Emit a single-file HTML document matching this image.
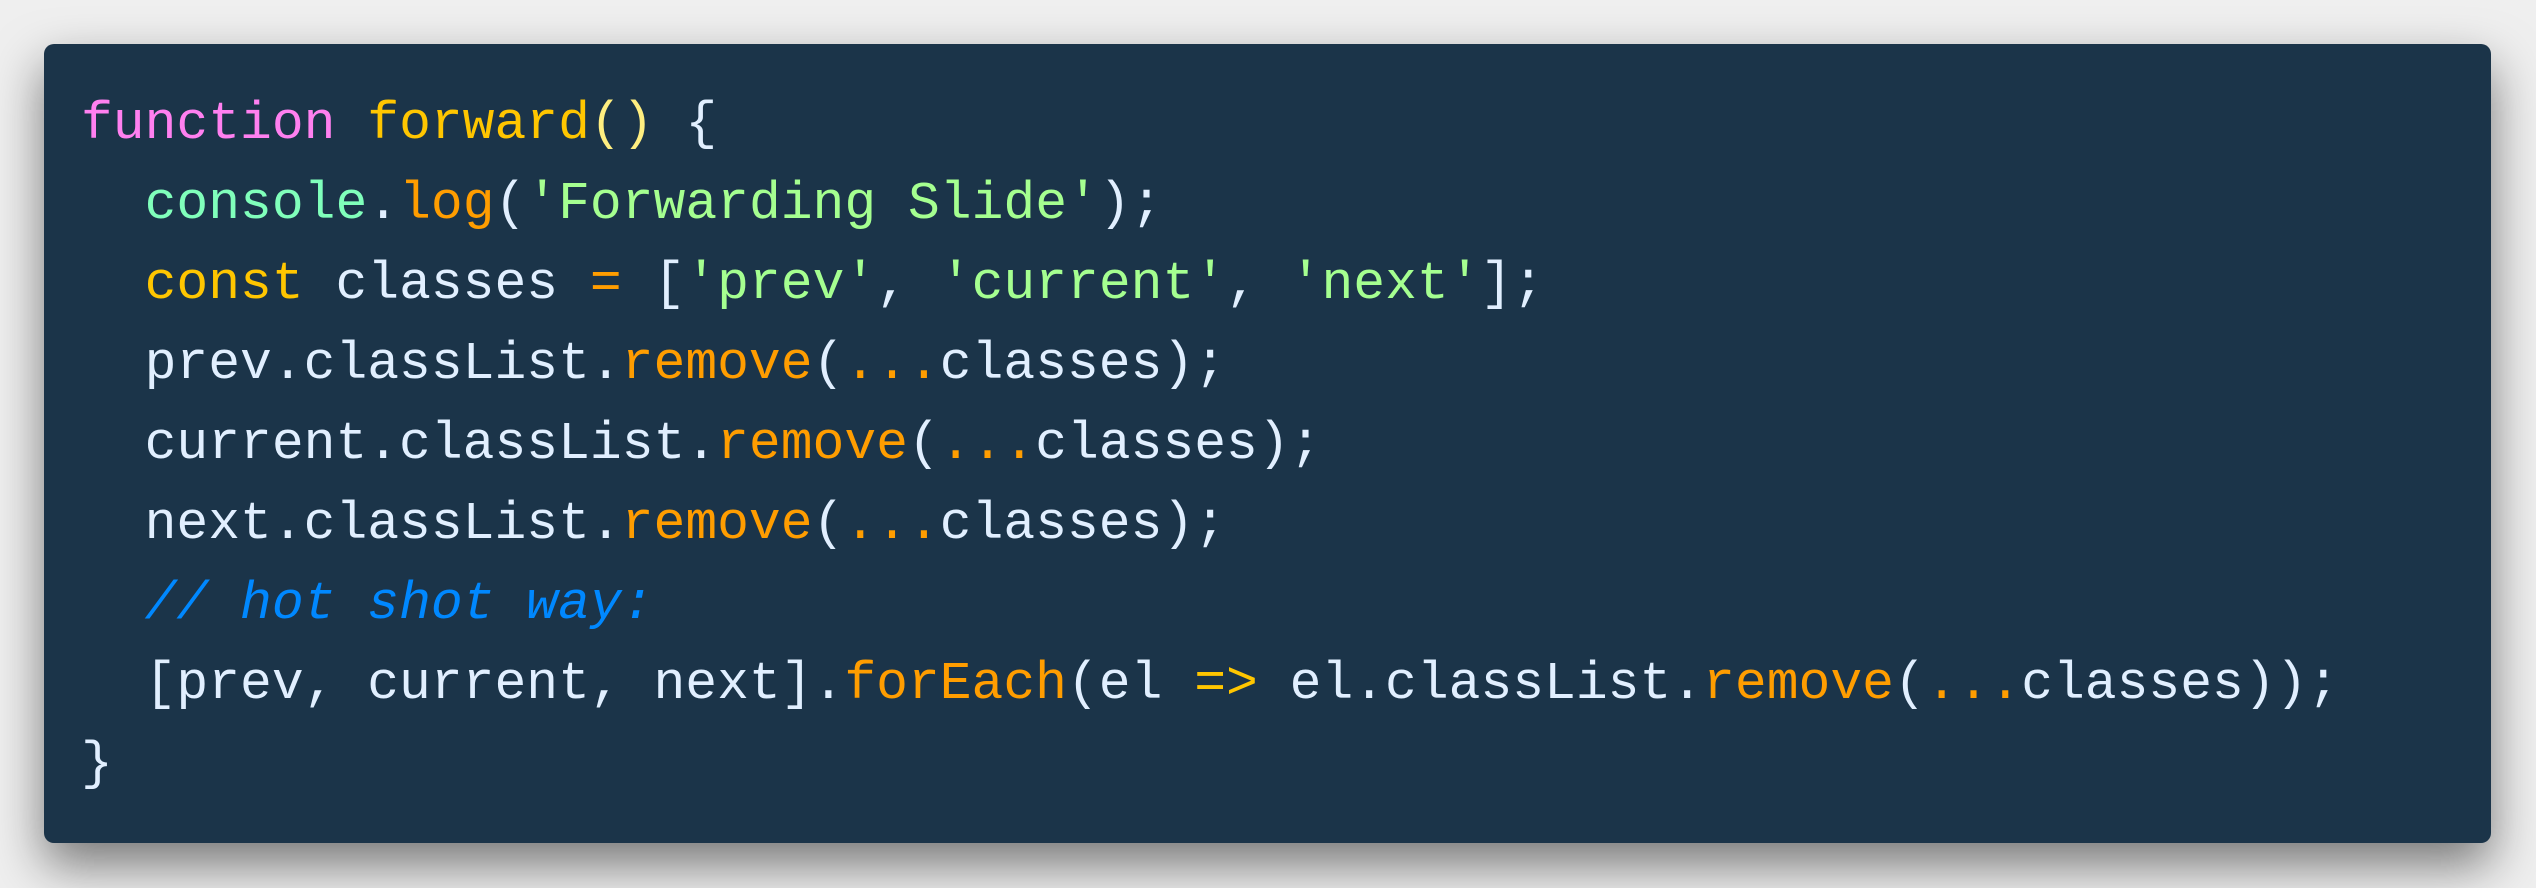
<!DOCTYPE html>
<html><head><meta charset="utf-8"><style>
html,body{margin:0;width:2536px;height:888px;background:#efefef;overflow:hidden}
.box{position:absolute;left:44px;top:44px;width:2447px;height:799px;background:#1b3449;border-radius:10px;box-shadow:0 22px 50px rgba(0,0,0,0.5)}
pre{margin:0;position:absolute;left:37px;top:40px;font-family:"Liberation Mono",monospace;font-size:53px;line-height:80px;color:#e1efff}
.k{color:#ff80f0}.y{color:#ffc600}.p{color:#ffee80}.g{color:#80ffbb}.o{color:#ff9d00}.s{color:#a5ff90}.c{color:#0088ff;font-style:italic}
</style></head><body><div class="box"><pre><span class="k">function</span> <span class="y">forward</span><span class="p">()</span> {
  <span class="g">console</span>.<span class="o">log</span>(<span class="s">'Forwarding Slide'</span>);
  <span class="y">const</span> classes <span class="o">=</span> [<span class="s">'prev'</span>, <span class="s">'current'</span>, <span class="s">'next'</span>];
  prev.classList.<span class="o">remove</span>(<span class="o">...</span>classes);
  current.classList.<span class="o">remove</span>(<span class="o">...</span>classes);
  next.classList.<span class="o">remove</span>(<span class="o">...</span>classes);
  <span class="c">// hot shot way:</span>
  [prev, current, next].<span class="o">forEach</span>(el <span class="y">=&gt;</span> el.classList.<span class="o">remove</span>(<span class="o">...</span>classes));
}</pre></div></body></html>
